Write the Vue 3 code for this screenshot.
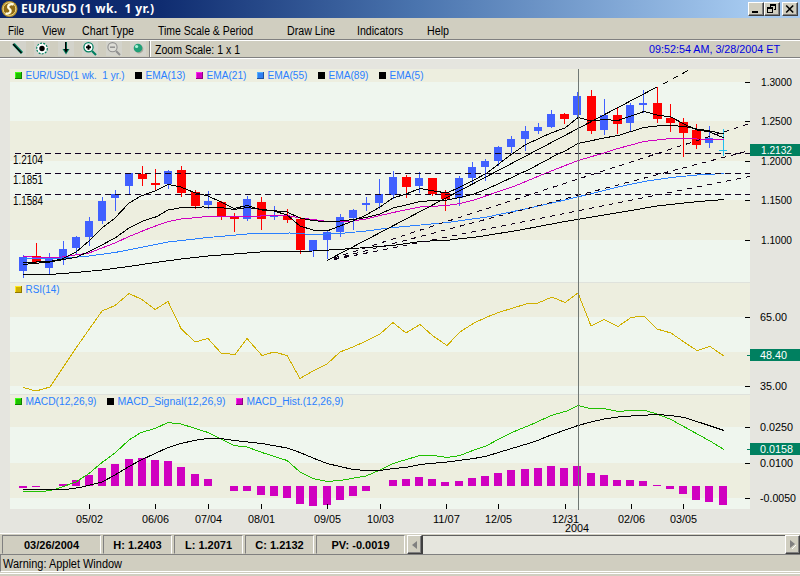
<template>
  <div class="window">
    <header class="title-bar">
      <svg class="logo" width="17" height="18" viewBox="0 0 17 18">
        <circle cx="8.5" cy="9" r="8" fill="#b8932c" />
        <circle cx="8.5" cy="9" r="6.4" fill="#8f6a14" stroke="#f0dc8c" stroke-width="1" />
        <path d="M12.5 4.5 C9 3.5 7 5 7.2 7.2 C7.4 9 9.8 9 9.6 11 C9.4 13.2 7 14 4.6 13.4" fill="none" stroke="#fffbe0" stroke-width="2.4" />
      </svg>
      <svg class="title" width="140" height="18"><text x="1" y="13" textLength="133">EUR/USD (1 wk.&nbsp; 1 yr.)</text></svg>
      <div class="window-buttons">
        <button class="win-btn">
          <svg width="12" height="10" viewBox="0 0 12 10" shape-rendering="crispEdges"><path d="M2 7h6v2H2z" /></svg>
        </button>
        <button class="win-btn">
          <svg width="12" height="10" viewBox="0 0 12 10" shape-rendering="crispEdges" fill="none" stroke="#000">
            <path d="M4.5 3V.5h5v5H8M4 1.5h6M1.5 3.5h5v5h-5zM1 4.5h6" />
          </svg>
        </button>
        <button class="win-btn close">
          <svg width="12" height="10" viewBox="0 0 12 10"><path d="M2.2 1.5l7 7M9.2 1.5l-7 7" stroke="#000" stroke-width="1.6" /></svg>
        </button>
      </div>
    </header>

    <nav class="menu-bar">
      <svg v-for="m in menus" :key="m.label" class="menu-item" :width="m.slot" height="20">
        <text x="0" y="17" :textLength="m.width" lengthAdjust="spacingAndGlyphs">{{ m.label }}</text>
      </svg>
    </nav>

    <div class="tool-bar">
      <div class="tools">
        <svg class="tool" width="16" height="15" viewBox="0 0 16 15">
          <path d="M3.5 3l8.5 9" stroke="#008060" stroke-width="3" />
          <path d="M3 3l8.5 9" stroke="#000" stroke-width="1.2" />
        </svg>
        <svg class="tool" width="16" height="15" viewBox="0 0 16 15">
          <circle cx="8" cy="7.5" r="5.3" fill="#fff" stroke="#008060" stroke-width="1.2" stroke-dasharray="2 1.2" />
          <circle cx="8" cy="7.5" r="2.7" />
        </svg>
        <svg class="tool" width="16" height="15" viewBox="0 0 16 15">
          <path d="M7 1h2v7h2.5L8 13.5 4.5 8H7z" fill="#008060" />
          <path d="M7 1h1.3v7h1.7L8 12 6 8h1z" />
        </svg>
        <svg class="tool" width="16" height="15" viewBox="0 0 16 15">
          <circle cx="6.5" cy="6.2" r="4.6" fill="#fff" stroke="#008060" stroke-width="1.2" />
          <path d="M10 10l4 4" stroke="#008060" stroke-width="2.2" />
          <path d="M4 6.2h5M6.5 3.7v5" stroke="#000" stroke-width="2" />
        </svg>
        <svg class="tool" width="16" height="15" viewBox="0 0 16 15" fill="none" stroke="#909090">
          <circle cx="6.5" cy="6.2" r="4.6" fill="#dcdcd6" stroke-width="1.1" />
          <path d="M10 10l4 4" stroke-width="2" />
          <path d="M4 6.2h5" stroke-width="1.5" />
        </svg>
        <svg class="tool" width="16" height="15" viewBox="0 0 16 15">
          <circle cx="9" cy="8" r="4.4" fill="#aaa99c" />
          <circle cx="8" cy="7" r="4.3" fill="#20a078" />
          <circle cx="6.6" cy="5.5" r="1.6" fill="#b0f0d8" />
        </svg>
      </div>
      <svg class="zoom-label" width="100" height="16">
        <text x="5" y="13" textLength="85" lengthAdjust="spacingAndGlyphs">Zoom Scale: 1 x 1</text>
      </svg>
      <svg class="clock" width="151" height="16">
        <text x="0" y="12" textLength="131" lengthAdjust="spacingAndGlyphs">09:52:54 AM, 3/28/2004 ET</text>
      </svg>
    </div>

    <svg class="chart" width="800" height="475" viewBox="0 59 800 475">
      <defs>
        <clipPath id="plot"><rect x="10" y="69" width="740" height="440" /></clipPath>
      </defs>

      <g shape-rendering="crispEdges">
        <rect x="10" y="69" width="740" height="440" fill="#eff6ee" />
        <rect v-for="b in bands" :key="b[0]" x="10" :y="b[0]" width="740" :height="b[1] - b[0]" fill="#edeedf" />
        <path d="M10 282.5H750M10 394.5H750" stroke="#dfe2dc" />

        <!-- price candles -->
        <g v-for="(c, i) in candles" :key="'c' + i" :fill="candleColor(c, i)">
          <rect :x="barX(i) + 4" :y="c[3]" width="1" :height="c[4] - c[3]" />
          <rect :x="barX(i)" :y="c[1]" :width="c[0] === 'r' ? 9 : 8" :height="c[2] - c[1]" />
        </g>

        <!-- macd histogram -->
        <rect
          v-for="(h, i) in histogram"
          :key="'h' + i"
          :x="barX(i)"
          :y="h > 0 ? 486 - h : 486"
          width="8"
          :height="Math.abs(h)"
          fill="#d000c0"
        />

        <g fill="none" clip-path="url(#plot)">
          <polyline v-for="l in lines" :key="l.name" :points="l.points" :stroke="l.color" />
          <path d="M15 153.5H750M15 173.5H750M15 194.5H750" stroke="#100020" stroke-dasharray="6 4" />
          <path d="M327 260.5L657 87" stroke="#000" />
          <path d="M663 84L691 69" stroke="#000" stroke-dasharray="6 5" />
          <path d="M334 258L750 123.5M334 259L750 150.5M334 259.5L750 176.5" stroke="#100018" stroke-dasharray="5 5" />
        </g>

        <path d="M578.5 69V510" stroke="#707874" />
        <path :d="axisTicks" stroke="#000" fill="none" />
        <path d="M747 449.5h3M747 355.5h3" stroke="#008060" />
        <rect v-for="b in badges" :key="b.text" x="750" :y="b.y - 6" width="50" height="12" fill="#008060" />
      </g>

      <g class="level">
        <text x="13" y="164" textLength="30" lengthAdjust="spacingAndGlyphs">1.2104</text>
        <text x="13" y="184" textLength="30" lengthAdjust="spacingAndGlyphs">1.1851</text>
        <text x="13" y="205" textLength="30" lengthAdjust="spacingAndGlyphs">1.1584</text>
      </g>

      <g v-for="l in legend" :key="l.text">
        <g shape-rendering="crispEdges">
          <rect :x="l.x" :y="l.y - 7" width="7" height="7" :fill="l.dark" />
          <rect :x="l.x" :y="l.y - 7" width="6" height="6" :fill="l.light" />
          <rect :x="l.x + 1" :y="l.y - 6" width="5" height="5" :fill="l.color" />
        </g>
        <text class="legend" :x="l.x + 10.5" :y="l.y" :textLength="l.w" lengthAdjust="spacingAndGlyphs" xml:space="preserve">{{ l.text }}</text>
      </g>

      <g class="axis">
        <text v-for="t in axisLabels" :key="t.text" :x="t.x" :y="t.y + 4" :textLength="t.w" lengthAdjust="spacingAndGlyphs">{{ t.text }}</text>
        <text v-for="t in badges" :key="t.text" class="on-badge" :x="t.x" :y="t.y + 4" :textLength="t.w" lengthAdjust="spacingAndGlyphs">{{ t.text }}</text>
        <text v-for="d in dates" :key="d.text" :x="d.x - 13" y="523" textLength="27" lengthAdjust="spacingAndGlyphs">{{ d.text }}</text>
        <text x="565" y="532" textLength="24" lengthAdjust="spacingAndGlyphs">2004</text>
      </g>
    </svg>

    <div class="status-bar">
      <div class="cell date">03/26/2004</div>
      <div class="cell">H: 1.2403</div>
      <div class="cell">L: 1.2071</div>
      <div class="cell">C: 1.2132</div>
      <div class="cell pv">PV: -0.0019</div>
      <div class="scroll-btn"><svg width="6" height="8"><path d="M5 0v8L0 4z" fill="#808080" /></svg></div>
      <div class="scroll-track"></div>
      <div class="scroll-btn"><svg width="6" height="9"><path d="M2 9l4-4" stroke="#fff" /><path d="M0 0v8l5-4z" fill="#808080" /></svg></div>
    </div>
    <footer class="warning">
      <svg width="130" height="16"><text x="2" y="12.5" textLength="119" lengthAdjust="spacingAndGlyphs">Warning: Applet Window</text></svg>
    </footer>
    <div class="window-edge"></div>
  </div>
</template>

<script setup>
const menus = [
  { label: 'File', width: 16, slot: 34 },
  { label: 'View', width: 23, slot: 40 },
  { label: 'Chart Type', width: 52, slot: 76 },
  { label: 'Time Scale & Period', width: 95, slot: 129 },
  { label: 'Draw Line', width: 48, slot: 70 },
  { label: 'Indicators', width: 46, slot: 70 },
  { label: 'Help', width: 22, slot: 40 }
]

const bands = [[69, 82], [121, 161], [200, 240], [283, 317], [352, 386], [395, 427], [463, 498]]

// direction, body top, body bottom, high, low
const candles = [
  ['b', 257, 271, 255, 278], ['r', 256, 262, 243, 264], ['b', 258, 268, 253, 274], ['b', 249, 259, 241, 265],
  ['b', 237, 248, 236, 254], ['b', 221, 237, 217, 246], ['b', 201, 221, 197, 224], ['b', 194, 198, 190, 211],
  ['b', 173, 186, 173, 194], ['r', 174, 179, 166, 186], ['r', 183, 185, 169, 191], ['b', 171, 184, 170, 189],
  ['r', 170, 193, 166, 197], ['r', 192, 206, 190, 209], ['b', 201, 205, 191, 209], ['r', 202, 217, 201, 220],
  ['r', 217, 219, 213, 232], ['b', 199, 219, 196, 221], ['r', 202, 219, 197, 230], ['b', 215, 217, 206, 220],
  ['r', 216, 220, 209, 223], ['r', 219, 250, 217, 254], ['b', 240, 251, 240, 257], ['b', 232, 240, 230, 259],
  ['b', 217, 232, 214, 237], ['b', 210, 218, 209, 230], ['b', 203, 205, 197, 211], ['b', 194, 203, 179, 209],
  ['b', 177, 195, 171, 199], ['r', 177, 187, 175, 198], ['b', 178, 186, 172, 193], ['r', 178, 194, 178, 196],
  ['r', 193, 199, 190, 211], ['b', 178, 198, 176, 206], ['b', 167, 178, 162, 183], ['b', 161, 167, 159, 181],
  ['b', 147, 161, 146, 166], ['b', 139, 147, 136, 153], ['b', 131, 139, 126, 151], ['b', 127, 131, 123, 134],
  ['b', 114, 127, 110, 128], ['r', 114, 119, 113, 124], ['b', 96, 115, 92, 117], ['r', 96, 131, 90, 134],
  ['b', 115, 130, 99, 135], ['r', 115, 124, 108, 134], ['b', 105, 123, 103, 131], ['b', 103, 105, 90, 113],
  ['r', 103, 119, 87, 123], ['r', 118, 123, 104, 132], ['r', 122, 133, 118, 157], ['r', 130, 145, 124, 149],
  ['b', 138, 143, 126, 148], ['b', 150, 151, 129, 156]
]

const histogram = [
  -2, -1, 0, 2, 6, 11, 18, 22, 27, 28, 26, 25, 19, 12, 7, 0, -5, -5, -9, -10, -12, -18, -20, -19, -14, -10, -5, 0,
  6, 7, 9, 7, 4, 5, 8, 10, 13, 16, 17, 18, 20, 18, 20, 13, 11, 6, 6, 5, 1, -3, -8, -14, -16, -19
]

const barX = (i) => Math.round(19 + i * 13.2)

const candleColor = (c, i) => {
  if (i === candles.length - 1) return '#20c0f0'
  return c[0] === 'r' ? '#ff0000' : '#4060ff'
}

const lines = [
  {
    name: 'EMA89',
    color: '#000',
    points: '23,274.5 50,274.5 76,272.5 102,270 129,266.5 155,262.5 181,259 208,256 260,252 313,251 353,248.5 393,245.5 420,241.5 450,240 480,236.5 520,230 565,221.5 604,215 631,210.5 657,206 684,203 705,201 724,199.5'
  },
  {
    name: 'EMA55',
    color: '#2a80ff',
    points: '23,258 62,258.5 89,256 115,252.5 141,247.5 168,242 208,237.5 247,234 290,233 313,234.5 340,233.5 366,231 393,227.5 410,226 447,222.5 487,217 525,209 565,200 592,193.5 618,187 644,181.5 671,177.5 697,175 724,173.5'
  },
  {
    name: 'EMA21',
    color: '#d000c0',
    points: '23,256.5 40,257.5 62,257 89,253 115,243 129,236.5 150,228 168,221.5 181,219 208,216.5 234,217 274,215.5 287,215.5 300,218 313,219.5 327,221.5 353,221 366,219 380,215.5 400,211 420,207 447,205.5 460,203.5 474,200 490,194.5 515,186 545,173.5 578,160.5 604,153 618,148.5 644,141.5 671,138.5 697,139 724,140'
  },
  {
    name: 'EMA13',
    color: '#000',
    points: '23,264.5 50,262 77,257 90,251 100,246 115,238 129,228 143,221 157,216.5 168,210 182,207.5 203,207 221,207.5 234,209.5 247,207.5 262,209.5 287,212 300,218 313,220.5 327,222 340,221 353,219.5 366,217.5 380,214 393,208 406,205 420,201.5 434,200.5 447,200 460,197.5 474,194 487,189 500,183 515,176 530,169 545,161 556,155 565,151 578,143.5 604,138 618,135.5 644,127.5 657,126 671,125.5 684,126.5 697,129 710,131 724,134'
  },
  {
    name: 'EMA5',
    color: '#000',
    points: '23,262.5 50,261.5 62,259 76,252 89,241 102,228 115,218 129,203 141,196 155,191 168,184.5 181,187 194,192.5 208,196 221,202 234,208.5 247,205.5 262,210 274,211 287,215 300,226 313,230 327,231 340,226 353,221 366,215 380,207 393,198 406,194 420,188.5 434,191 447,193 460,187 474,180 487,173 500,163 512,154 525,145 540,138 551,133 565,128 578,117.5 591,121 604,119.5 618,120.5 631,116 644,111.5 657,115 671,117 684,124 697,130 710,132 724,138'
  },
  {
    name: 'RSI',
    color: '#d0b000',
    points: '23,387.5 36,391 50,387 76,348 102,311 115,305.5 129,293.5 142,299.5 155,309.5 168,301.5 181,328.5 195,342 208,338.5 221,353 235,354.5 247,338.5 262,355.5 274,352 287,355.5 300,378.5 313,371 327,364 340,352 353,347 366,341 380,334 393,322.5 406,333 420,324.5 433,336 447,345.5 460,332 474,323 487,317 500,312 513,308 526,304 538,303 552,297 565,302.5 578,293 591,326 604,319.5 618,326.5 631,317.5 644,316 657,329 671,333 684,342 697,350.5 710,346.5 724,356'
  },
  {
    name: 'MACD',
    color: '#20c000',
    points: '23,491.5 43,491.5 55,489.5 76,482 89,473.5 102,462.5 115,453 129,440 141,432.5 155,428.5 168,422.5 181,424 194,428 208,432.5 221,439 234,445.5 247,447 262,452.5 287,460.5 300,472 313,478.5 327,481.5 340,480.5 366,476 380,470 393,463.5 420,455.5 434,455.5 447,457.5 460,455.5 474,450 485,446.5 500,438.5 513,432 535,423 551,415.5 567,411 578,405.5 590,408.5 604,408.5 618,411.5 631,410.5 645,410.5 657,414 671,419.5 690,430 710,441 724,449.5'
  },
  {
    name: 'Signal',
    color: '#000',
    points: '23,489.5 66,489.5 82,487 102,482 115,475 129,466.5 141,460 155,453.5 168,447.5 181,443.5 194,440.5 208,438.5 221,438.5 234,440.5 262,443.5 287,448 300,452.5 313,458 327,463.5 340,466.5 353,469.5 366,470.5 380,470.5 393,468.5 406,467.5 420,464.5 447,462 474,458.5 487,456 500,452 535,441.5 551,435 578,425.5 591,422 604,419 618,417 631,416 657,414.5 671,415.5 684,417.5 700,422.5 724,430.5'
  }
]

const green = { color: '#20c000', light: '#40ff10', dark: '#108000' }
const black = { color: '#000', light: '#000', dark: '#000' }
const magenta = { color: '#d000c0', light: '#ff20f0', dark: '#900080' }
const blue = { color: '#3080f0', light: '#50b0ff', dark: '#2050a0' }
const gold = { color: '#d0b000', light: '#ffe820', dark: '#907800' }

const legend = [
  { text: 'EUR/USD(1 wk.  1 yr.)', x: 15, y: 79, w: 99, ...green },
  { text: 'EMA(13)', x: 135, y: 79, w: 40, ...black },
  { text: 'EMA(21)', x: 196, y: 79, w: 40, ...magenta },
  { text: 'EMA(55)', x: 257, y: 79, w: 40, ...blue },
  { text: 'EMA(89)', x: 318, y: 79, w: 40, ...black },
  { text: 'EMA(5)', x: 379, y: 79, w: 34, ...black },
  { text: 'RSI(14)', x: 15, y: 293, w: 34, ...gold },
  { text: 'MACD(12,26,9)', x: 15, y: 405, w: 71, ...green },
  { text: 'MACD_Signal(12,26,9)', x: 107, y: 405, w: 108, ...black },
  { text: 'MACD_Hist.(12,26,9)', x: 236, y: 405, w: 97, ...magenta }
]

const axisLabels = [
  { text: '1.3000', x: 761, y: 82, w: 31 },
  { text: '1.2500', x: 761, y: 121, w: 31 },
  { text: '1.2000', x: 761, y: 161, w: 31 },
  { text: '1.1500', x: 761, y: 200, w: 31 },
  { text: '1.1000', x: 761, y: 240, w: 31 },
  { text: '65.00', x: 760, y: 317, w: 27 },
  { text: '35.00', x: 760, y: 386, w: 27 },
  { text: '0.0250', x: 760, y: 427, w: 33 },
  { text: '0.0100', x: 760, y: 463, w: 33 },
  { text: '-0.0050', x: 760, y: 498, w: 36 }
]

const badges = [
  { text: '1.2132', x: 761, y: 150, w: 31 },
  { text: '48.40', x: 760, y: 355, w: 27 },
  { text: '0.0158', x: 760, y: 449, w: 33 }
]

const dates = [
  { text: '05/02', x: 89 },
  { text: '06/06', x: 155 },
  { text: '07/04', x: 208 },
  { text: '08/01', x: 261 },
  { text: '09/05', x: 327 },
  { text: '10/03', x: 380 },
  { text: '11/07', x: 446 },
  { text: '12/05', x: 498 },
  { text: '12/31', x: 565 },
  { text: '02/06', x: 631 },
  { text: '03/05', x: 683 }
]

const axisTicks =
  axisLabels.map((t) => `M745 ${t.y + 0.5}h5`).join('') +
  dates.map((d) => `M${d.x + 0.5} 504v5`).join('')
</script>

<style>
body {
  background: #d0cec0;
}
</style>

<style scoped>
.window {
  width: 800px;
  height: 576px;
  display: flex;
  flex-direction: column;
  overflow: hidden;
  background: #d0cec0;
  font-family: "Liberation Sans", Arial, sans-serif;
  font-size: 12px;
  color: #000;
}

svg {
  display: block;
  flex: none;
  overflow: visible;
}

.title-bar {
  height: 18px;
  flex: none;
  display: flex;
  align-items: center;
  padding-left: 1px;
  background: linear-gradient(to right, #0a246a, #0f2c70 20%, #4a74ae 52%, #a6caf0 94%);
}

.title {
  margin-left: 2px;
  fill: #fff;
  font: bold 12px "Noto Sans", "DejaVu Sans", sans-serif;
}

.window-buttons {
  display: flex;
  margin-left: auto;
  padding-right: 2px;
}

.win-btn {
  width: 16px;
  height: 14px;
  padding: 1px;
  border: 1px solid;
  border-color: #fff #404040 #404040 #fff;
  box-shadow: inset -1px -1px #808080;
  background: #d0cec0;
}

.win-btn.close {
  margin-left: 2px;
}

.menu-bar {
  height: 21px;
  flex: none;
  display: flex;
  padding-left: 8px;
  border-bottom: 1px solid #808080;
}

.tool-bar {
  height: 16px;
  flex: none;
  display: flex;
  border-top: 1px solid #fff;
  border-bottom: 1px solid #808080;
}

.tools {
  width: 149px;
  display: flex;
  gap: 8px;
  padding-left: 10px;
  box-sizing: border-box;
}

.tool {
  background: #d3d3cb;
}

.zoom-label {
  border-left: 1px solid #808080;
  box-shadow: inset 1px 0 #fff;
}

.clock {
  margin-left: auto;
  fill: #0000e0;
  font-size: 10px;
}

.chart {
  background: #e5e5df;
  border-top: 1px solid #fff;
  margin-bottom: -1px;
  overflow: hidden;
}

.chart text {
  font-size: 10px;
}

.chart .level text {
  font-size: 12px;
}

.legend {
  fill: #2a80ff;
  white-space: pre;
}

.chart .on-badge {
  fill: #fff;
}

.status-bar {
  height: 19px;
  flex: none;
  display: flex;
  gap: 2px;
  padding: 1px 0 0 2px;
  border-top: 1px solid #fff;
  border-bottom: 1px solid #808080;
}

.cell {
  width: 69px;
  box-sizing: border-box;
  border: 1px solid;
  border-color: #808080 #fff #d0cec0 #808080;
  font-size: 11px;
  font-weight: bold;
  line-height: 18px;
  text-align: center;
}

.cell.date {
  width: 99px;
}

.cell.pv {
  width: 89px;
}

.scroll-btn {
  width: 15px;
  box-sizing: border-box;
  display: flex;
  align-items: center;
  justify-content: center;
  border: 1px solid;
  border-color: #fff #404040 #404040 #fff;
  box-shadow: inset -1px -1px #808080;
}

.scroll-track {
  flex: 1;
  margin: 0 -2px;
  background: #e6e6de;
  border-top: 1px solid #606060;
  border-left: 1px solid #404040;
}

.warning {
  height: 16px;
  flex: none;
  border-left: 1px solid #808080;
  border-bottom: 1px solid #fff;
}

.window-edge {
  height: 1px;
  flex: none;
  margin-top: 1px;
  background: #fff;
}
</style>
